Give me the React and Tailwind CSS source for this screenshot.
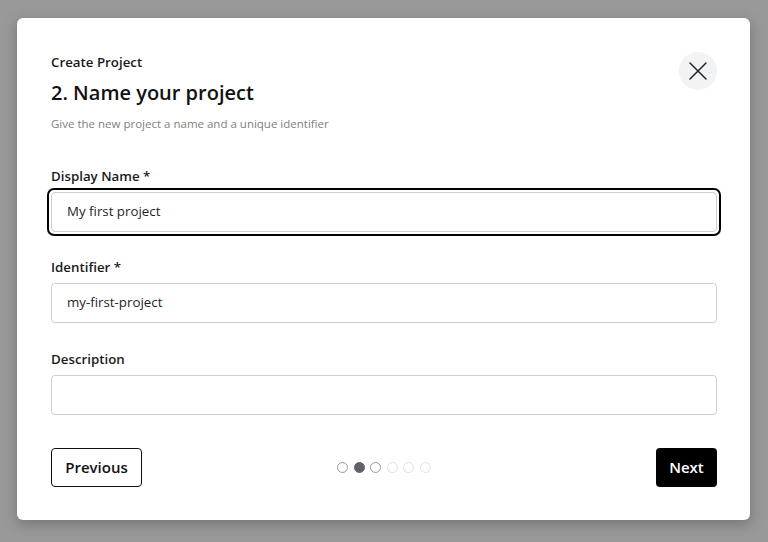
import React from "react";

const font = { fontFamily: '"Open Sans", "Noto Sans", sans-serif' };

function Field({ label, value, focused, mt }) {
  return (
    <div className={mt}>
      <div className="text-[13.3px] leading-[18px] font-semibold text-[#1a1a1a]">{label}</div>
      <div className="mt-[7px] relative">
        {focused && (
          <div className="absolute -inset-[4px] rounded-[7px] border-[2.5px] border-black pointer-events-none" />
        )}
        <div className="h-[40px] rounded-[4px] border border-[#cfcfcf] bg-white flex items-center pl-[15px] text-[13.3px] text-[#1f1f1f]">
          {value}
        </div>
      </div>
    </div>
  );
}

export default function App() {
  const dots = [
    "border-[#9a9a9a]",
    "bg-[#5f6368] border-[#5f6368]",
    "border-[#9a9a9a]",
    "border-[#e2e2e2]",
    "border-[#e2e2e2]",
    "border-[#e2e2e2]",
  ];
  return (
    <div className="w-[768px] h-[542px] bg-[#999999] pt-[18px] pl-[17px]" style={font}>
      <div className="w-[733px] h-[502px] bg-white rounded-[6px] shadow-[0_4px_14px_rgba(0,0,0,0.25)] pl-[34px] pr-[33px] pt-[35px] flex flex-col">
        <div className="flex justify-between items-start">
          <div>
            <div className="text-[13.3px] leading-[18px] font-semibold text-[#1a1a1a]">Create Project</div>
            <div className="mt-[8px] text-[20px] leading-[28px] font-semibold text-[#111]">2. Name your project</div>
            <div className="mt-[9px] text-[11.5px] leading-[16px] text-[#808080]">Give the new project a name and a unique identifier</div>
          </div>
          <button className="w-[38px] h-[38px] rounded-full bg-[#f1f3f4] flex items-center justify-center -mt-[1px]">
            <svg width="20" height="20" viewBox="0 0 20 20" fill="none" stroke="#222" strokeWidth="1.5" strokeLinecap="round">
              <path d="M2 2 L18 18 M18 2 L2 18" />
            </svg>
          </button>
        </div>
        <Field mt="mt-[35px]" label="Display Name *" value="My first project" focused />
        <Field mt="mt-[26px]" label="Identifier *" value="my-first-project" />
        <Field mt="mt-[27px]" label="Description" value="" />
        <div className="mt-[33px] grid grid-cols-[1fr_auto_1fr] items-center">
          <button className="justify-self-start h-[39px] w-[91px] rounded-[4px] border border-[#111] bg-white text-[15px] font-semibold text-[#111]">
            Previous
          </button>
          <div className="flex items-center gap-[5.6px]">
            {dots.map((c, i) => (
              <div key={i} className={`w-[11px] h-[11px] rounded-full border-[1.5px] ${c}`} />
            ))}
          </div>
          <button className="justify-self-end h-[39px] w-[61px] rounded-[4px] bg-black text-[15px] font-semibold text-white">
            Next
          </button>
        </div>
      </div>
    </div>
  );
}
